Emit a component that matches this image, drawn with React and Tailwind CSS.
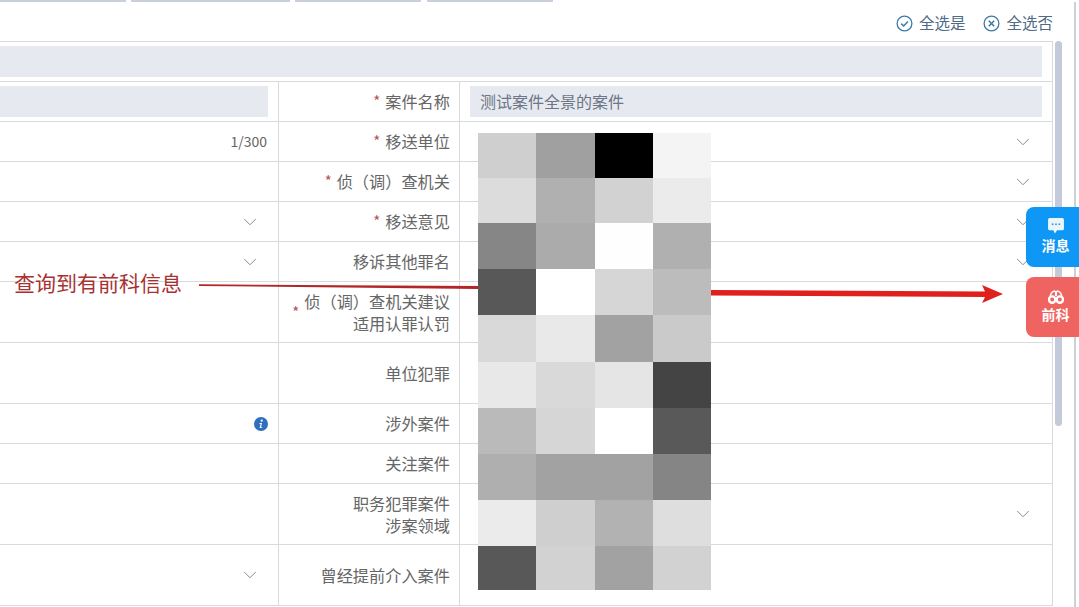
import React from "react";
import { ChevronDown } from "lucide-react";

const mosaic = [
  ["#cfcfcf", "#a0a0a0", "#000000", "#f4f4f4"],
  ["#dcdcdc", "#b0b0b0", "#d2d2d2", "#ebebeb"],
  ["#868686", "#ababab", "#fefefe", "#b0b0b0"],
  ["#585858", "#ffffff", "#d6d6d6", "#bcbcbc"],
  ["#d9d9d9", "#e9e9e9", "#a2a2a2", "#cacaca"],
  ["#e8e8e8", "#d9d9d9", "#e5e5e5", "#444444"],
  ["#bababa", "#d6d6d6", "#ffffff", "#595959"],
  ["#afafaf", "#a2a2a2", "#a2a2a2", "#858585"],
  ["#ebebeb", "#cfcfcf", "#b2b2b2", "#dedede"],
  ["#585858", "#d2d2d2", "#a2a2a2", "#d2d2d2"],
];

const rows = [
  { label: "案件名称", required: true, h: "h-10", input: true },
  { label: "移送单位", required: true, h: "h-10", left: "count", right: true },
  { label: "侦（调）查机关", required: true, h: "h-10", right: true },
  { label: "移送意见", required: true, h: "h-10", left: "chevron", right: true },
  { label: "移诉其他罪名", h: "h-10", left: "chevron", right: true },
  { label: ["侦（调）查机关建议", "适用认罪认罚"], required: true, h: "h-[61px]", tall: true },
  { label: "单位犯罪", h: "h-[61px]", tall: true },
  { label: "涉外案件", h: "h-10", left: "info" },
  { label: "关注案件", h: "h-10" },
  { label: ["职务犯罪案件", "涉案领域"], h: "h-[61px]", right: true, tall: true },
  { label: "曾经提前介入案件", h: "h-[61px]", left: "chevron", tall: true },
];

function Chevron() {
  return <ChevronDown size={22} strokeWidth={1} className="text-[#77818c]" />;
}

function CheckIcon() {
  return (
    <svg width="17" height="17" viewBox="0 0 17 17" fill="none" stroke="#3f7aa8" strokeWidth="1.3">
      <circle cx="8.5" cy="8.5" r="7.4" />
      <path d="M5.2 8.6 L7.7 11 L11.9 6.4" strokeWidth="1.5" />
    </svg>
  );
}

function CrossIcon() {
  return (
    <svg width="17" height="17" viewBox="0 0 17 17" fill="none" stroke="#3f7aa8" strokeWidth="1.3">
      <circle cx="8.5" cy="8.5" r="7.4" />
      <path d="M5.8 5.8 L11.2 11.2 M11.2 5.8 L5.8 11.2" strokeWidth="1.6" />
    </svg>
  );
}

function InfoIcon() {
  return (
    <svg width="14" height="14" viewBox="0 0 14 14">
      <circle cx="7" cy="7" r="7" fill="#2f6fbd" />
      <circle cx="7.7" cy="3.7" r="1.1" fill="#fff" />
      <path d="M5.6 6.1 H8 L7 10.2 H8.3 L8.1 11 H5.6 L6.6 6.9 H5.4 Z" fill="#fff" />
    </svg>
  );
}

function LeftCell({ type }) {
  return (
    <div className="w-[279px] shrink-0 border-r border-[#d9dadc] flex items-center justify-end">
      {type === "count" && <span className="pr-[11px] text-[14px] text-[#666]">1/300</span>}
      {type === "chevron" && <span className="pr-[17px] flex"><Chevron /></span>}
      {type === "info" && <span className="pr-[10px] flex"><InfoIcon /></span>}
    </div>
  );
}

function FormRow({ row }) {
  const lines = Array.isArray(row.label) ? row.label : [row.label];
  return (
    <div className={`flex border-b border-[#d9dadc] ${row.h}`}>
      {row.input ? (
        <div className="w-[279px] shrink-0 border-r border-[#d9dadc] flex items-center pr-[10px]">
          <div className="w-full h-[31px] bg-[#e6e9f0]" />
        </div>
      ) : (
        <LeftCell type={row.left} />
      )}
      <div className={`w-[181px] shrink-0 border-r border-[#d9dadc] flex items-center justify-end gap-[5px] pr-[9px] text-[16.2px] leading-[22px] text-[#666] ${row.tall ? "" : "pb-[2px]"}`}>
        {row.required && <span className="text-[#b5535a] text-[15px]">*</span>}
        <div className="text-right">
          {lines.map((line) => (
            <div key={line}>{line}</div>
          ))}
        </div>
      </div>
      <div className="flex-1 flex items-center justify-end pl-[10px] pr-[10px]">
        {row.input && (
          <div className="w-full h-[31px] bg-[#e6e9f0] pl-[10px] pb-[2px] flex items-center text-[16px] text-[#6c7686]">
            测试案件全景的案件
          </div>
        )}
        {row.right && <span className="pr-[8px] flex"><Chevron /></span>}
      </div>
    </div>
  );
}

function SideButton({ className, icon, text }) {
  return (
    <div className={`w-[53px] h-[60px] rounded-l-lg pl-[6px] pb-[3px] flex flex-col items-center justify-center text-white text-[14px] leading-[17px] font-bold ${className}`}>
      {icon}
      <span>{text}</span>
    </div>
  );
}

export default function App() {
  return (
    <div className="relative w-[1079px] h-[607px] overflow-hidden bg-white" style={{ fontFamily: '"Noto Sans CJK SC", "Noto Sans", sans-serif' }}>
      <div className="flex gap-[5px] h-[2px]">
        <div className="w-[126px] bg-[#c9d0db]" />
        <div className="w-[159px] bg-[#c9d0db]" />
        <div className="w-[126px] bg-[#c9d0db]" />
        <div className="w-[126px] ml-px bg-[#c9d0db]" />
      </div>

      <div className="flex h-[605px]">
        <div className="w-[1053px] shrink-0">
          <div className="h-[39px] flex items-center justify-end gap-[18px] pt-[3px] text-[15.5px] text-[#4f6a85]">
            <div className="flex items-center gap-[6px]"><CheckIcon />全选是</div>
            <div className="flex items-center gap-[6px]"><CrossIcon />全选否</div>
          </div>
          <div className="border-t border-r border-[#d9dadc]">
            <div className="h-10 flex items-center border-b border-[#d9dadc] pr-[10px]">
              <div className="w-full h-[31px] bg-[#e6e9f0]" />
            </div>
            {rows.map((row, i) => (
              <FormRow key={i} row={row} />
            ))}
          </div>
        </div>
        <div className="w-[10px] shrink-0 pl-[2px] pt-[39px]">
          <div className="w-[7px] h-[385px] rounded-full bg-[#c3cbdb]" />
        </div>
        <div className="ml-[11px] w-[2px] bg-[#ccd1d6]" />
      </div>

      {/* pixelated block over the form */}
      <div className="absolute left-[478px] top-[133px] w-[233px] h-[457px] grid grid-cols-4 grid-rows-[45px_45px_46px_46px_47px_46px_46px_46px_46px_44px]">
        {mosaic.flat().map((color, i) => (
          <div key={i} style={{ backgroundColor: color }} />
        ))}
      </div>

      {/* red annotation */}
      <div className="absolute left-[14px] top-[267px] text-[21px] leading-[30px] text-[#a83232]">查询到有前科信息</div>
      <svg className="absolute left-0 top-0" width="1079" height="607" viewBox="0 0 1079 607" fill="none">
        <path d="M199 284.3 L478 286 L478 289 L199 286 Z" fill="#b32626" />
        <path d="M711 290 L985 291.5 L982 285 L1003 294 L982 303 L985 297 L711 295.5 Z" fill="#e0201c" />
      </svg>

      <div className="absolute right-0 top-[207px] flex flex-col gap-[10px]">
        <SideButton
          className="bg-[#0f97f5]"
          text="消息"
          icon={
            <svg width="18" height="18" viewBox="0 0 17 17" className="mb-[2px]">
              <path d="M2.5 1 H14.5 A1.5 1.5 0 0 1 16 2.5 V11 A1.5 1.5 0 0 1 14.5 12.5 H9.5 L7.5 15.5 L6 12.5 H2.5 A1.5 1.5 0 0 1 1 11 V2.5 A1.5 1.5 0 0 1 2.5 1 Z" fill="#eaf6fe" />
              <circle cx="5.3" cy="6.8" r="0.9" fill="#5f8fb0" />
              <circle cx="8.5" cy="6.8" r="0.9" fill="#5f8fb0" />
              <circle cx="11.7" cy="6.8" r="0.9" fill="#5f8fb0" />
            </svg>
          }
        />
        <SideButton
          className="bg-[#ef6360]"
          text="前科"
          icon={
            <svg width="16" height="16" viewBox="0 0 16 16" className="mb-[1px]">
              <circle cx="4.2" cy="10.6" r="3.2" fill="none" stroke="#fff" strokeWidth="2.4" />
              <circle cx="11.8" cy="10.6" r="3.2" fill="none" stroke="#fff" strokeWidth="2.4" />
              <path d="M1.8 8.5 Q3 2.5 6.5 2 Q8 2 7.6 7 M14.2 8.5 Q13 2.5 9.5 2 Q8 2 8.4 7" fill="none" stroke="#fff" strokeWidth="1.4" />
            </svg>
          }
        />
      </div>
    </div>
  );
}
